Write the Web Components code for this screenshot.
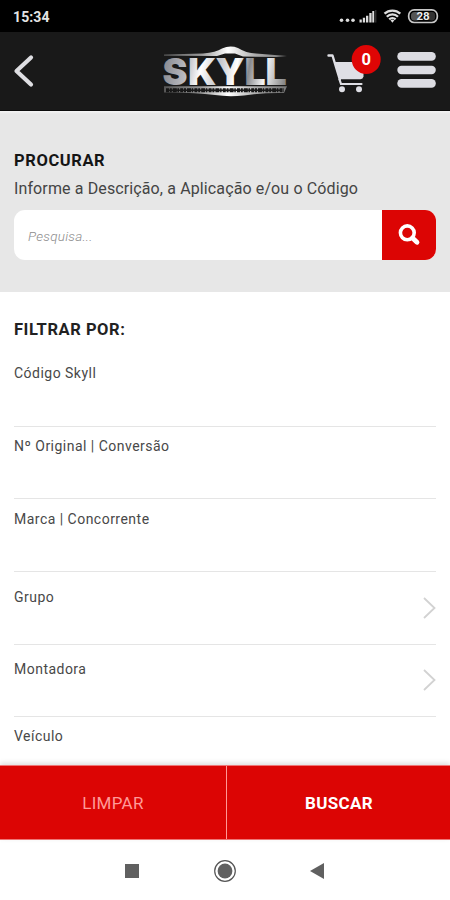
<!DOCTYPE html>
<html lang="pt-BR">
<head>
<meta charset="utf-8">
<title>Skyll</title>
<style>
html,body{margin:0;height:100%}
body{font-family:Roboto,"Liberation Sans",sans-serif;background:#fff;color:#333;overflow:hidden}
</style>
</head>
<body>
<skyll-app></skyll-app>
<script>
const define = (name, css, html) => customElements.define(name, class extends HTMLElement {
  connectedCallback() {
    if (this.shadowRoot) return;
    const root = this.attachShadow({mode: 'open'});
    const t = document.createElement('template');
    t.innerHTML = `<style>*{box-sizing:border-box}svg{display:block}${css}</style>${html}`;
    root.append(t.content.cloneNode(true));
  }
});

define('status-bar', `
:host{display:flex;height:32px;background:#000;color:#e4e4e4;justify-content:space-between;padding:0 11px 0 13px;align-items:center;box-sizing:border-box}
span{font-size:14px;font-weight:700;letter-spacing:.1px;line-height:32px;padding-top:1px}
`, `<span>15:34</span>
<svg width="100" height="24" viewBox="339 4 100 24">
  <g fill="#ddd"><circle cx="341.5" cy="20.2" r="1.8"/><circle cx="347.5" cy="20.2" r="1.8"/><circle cx="353" cy="20.2" r="1.8"/>
  <path d="M359.5 19.500h2.300v3h-2.300zM362.800 17.800h2.300v4.700h-2.300zM366 15.700h2.300v6.800h-2.300zM369.300 13h2.300v9.500h-2.300zM372.300 11h1.900v11.500h-1.900z"/><path d="M375.300 10h1v12.500h-1z" fill="#444"/></g>
  <g fill="none" stroke="#ddd" stroke-width="2.300"><path d="M384.500 13.700a11.500 11.500 0 0 1 15.800 0M386.800 16.700a8 8 0 0 1 11.200 0M389.200 19.300a4.700 4.700 0 0 1 6.400 0"/></g><path d="M390.500 20.300a3 3 0 0 1 3.800 0l-1.900 2.400z" fill="#ddd"/>
  <rect x="408.700" y="9.900" width="28.600" height="12.600" rx="5.500" fill="none" stroke="#c8c8c8" stroke-width="1.700"/>
  <rect x="411" y="12" width="9" height="8.400" rx="3.500" fill="#555"/><rect x="428" y="12" width="7" height="8.400" rx="3" fill="#333"/>
  <text x="423" y="20.300" font-size="11.500" font-weight="700" text-anchor="middle" fill="#eee">28</text>
</svg>`);

define('skyll-logo', `:host{display:block}`, `
<svg width="130" height="56" viewBox="159 44 130 56">
  <defs>
    <linearGradient id="m" gradientUnits="userSpaceOnUse" x1="163" y1="57" x2="285" y2="80"><stop offset="0" stop-color="#84868d"/><stop offset=".2" stop-color="#b9bac0"/><stop offset=".32" stop-color="#fff"/><stop offset=".46" stop-color="#c5c6ca"/><stop offset=".6" stop-color="#fff"/><stop offset=".7" stop-color="#888a8e"/><stop offset=".83" stop-color="#f4f4f4"/><stop offset="1" stop-color="#888"/></linearGradient>
    <linearGradient id="b"><stop offset="0" stop-color="#555"/><stop offset=".3" stop-color="#999"/><stop offset=".52" stop-color="#fff"/><stop offset=".75" stop-color="#aaa"/><stop offset="1" stop-color="#777"/></linearGradient>
  </defs>
  <path d="M164 55.500L203 54.500Q216 53.500 222 49.500Q230 46 238 49Q246 54 256 54.500L287 57L276 58L243 57.500L235 54.500H225L217 57L164 56.800z" fill="url(#b)"/>
  <text x="162.500 188 215.500 244.500 265.500" y="85.500" font-family="Inter" font-weight="900" font-size="37.500" fill="url(#m)">SKYLL</text>
  <path d="M164 87.300H287L284 94Q263 93.500 244 96.500Q228 98 215 96Q192 93 164 93.500z" fill="url(#b)"/>
  <path d="M166 91.300H284" stroke="#151515" stroke-width="4" stroke-dasharray="3 .8 2 1 4 .7 1.500 1.200"/>
  <path d="M168 91.300H282" stroke="#191919" stroke-width="1.500"/>
</svg>`);

define('app-header', `
:host{display:grid;grid-template-columns:1fr 130px 1fr;align-items:center;height:79px;background:#191919;border-bottom:1px solid #0b0b0b;padding:0 14px 0 12px;box-sizing:border-box}
.tools{display:flex;justify-content:flex-end;gap:15px;align-items:center}
`, `<svg width="22" height="34" viewBox="12 54 22 34"><path d="M31 57.500L16.500 71L31 84.500" fill="none" stroke="#dedee2" stroke-width="4.200" stroke-linecap="round" stroke-linejoin="round"/></svg>
<skyll-logo></skyll-logo>
<div class="tools">
<svg width="54" height="54" viewBox="327 44 54 54">
  <path d="M328.500 55.500H332.500L339.800 79.500" fill="none" stroke="#dfdfe5" stroke-width="2.400" stroke-linejoin="round" stroke-linecap="round"/>
  <path d="M339.500 79.500L341 84H361.500" fill="none" stroke="#dfdfe5" stroke-width="2.200" stroke-linecap="round"/>
  <path d="M334.500 62H363.500V76.500Q363 79 360.500 79.200H339.500z" fill="#dfdfe5"/><circle cx="342" cy="89.300" r="3" fill="#dfdfe5"/><circle cx="359" cy="89.300" r="3" fill="#dfdfe5"/>
  <circle cx="366.200" cy="59.500" r="14.500" fill="#df0505"/><text x="366.200" y="65" text-anchor="middle" font-size="16.500" font-weight="700" fill="#fff">0</text></svg>
<svg width="40" height="40" viewBox="396 50 40 40"><g fill="#dcdce2"><rect x="397.300" y="51" width="38.500" height="8.700" rx="4.300"/><rect x="397.300" y="64.800" width="38.500" height="8.500" rx="4.200"/><rect x="397.300" y="78" width="38.500" height="8.700" rx="4.300"/></g></svg>
</div>`);

define('search-panel', `
:host{display:block;height:181px;background:linear-gradient(#f4f4f4,#e7e7e7 3px);padding:40px 14px 0;box-sizing:border-box}
h2{margin:0;font-size:16.500px;line-height:20px;color:#151515;font-weight:700;letter-spacing:.600px}
p{margin:8px 0 0;font-size:16px;line-height:20px;letter-spacing:.12px;color:#444}
.box{margin-top:11px;display:flex;height:50px;border-radius:11px;overflow:hidden;background:#fff}
.in{flex:1;padding-left:14px;font-size:13.500px;line-height:53px;font-style:italic;color:#8c8c8c;font-weight:300;letter-spacing:.25px}
.go{width:54px;background:#dc0504;display:grid;place-items:center}
`, `<h2>PROCURAR</h2><p>Informe a Descrição, a Aplicação e/ou o Código</p>
<div class="box"><div class="in">Pesquisa...</div><div class="go"><svg width="24" height="24" viewBox="396 222 24 24"><circle cx="406.300" cy="231.800" r="6.900" fill="none" stroke="#fff" stroke-width="3.600"/><path d="M411.500 237L416 241.300" stroke="#fff" stroke-width="4.800" stroke-linecap="round"/></svg></div></div>`);

define('filter-row', `
:host{display:flex;justify-content:space-between;box-sizing:border-box;border-bottom:1px solid #e5e5e5;font-size:14px;line-height:18px;letter-spacing:.48px;color:#484848}
svg{display:none;margin-top:8px}:host([nav]) svg{display:block}
`, `<slot></slot><svg width="13" height="24" viewBox="0 0 13 24"><path d="M1 2L11.500 12L1 22" fill="none" stroke="#d2d2d2" stroke-width="1.800"/></svg>`);

define('filter-list', `
:host{display:block;height:473px;padding:28px 14px 0;box-sizing:border-box;overflow:hidden}
h2{margin:0 0 15px;font-size:16.500px;line-height:20px;font-weight:700;color:#222;letter-spacing:.550px}
filter-row{height:72px;padding-top:10px}
filter-row:first-of-type{padding-top:9px}
.b{height:73px;padding-top:11px}.g{height:73px;padding-top:16px}.m{padding-top:15px}
`, `<h2>FILTRAR POR:</h2><filter-row>Código Skyll</filter-row><filter-row>Nº Original | Conversão</filter-row><filter-row class="b">Marca | Concorrente</filter-row><filter-row class="g" nav>Grupo</filter-row><filter-row class="m" nav>Montadora</filter-row><filter-row>Veículo</filter-row>`);

define('action-bar', `
:host{display:flex;height:75px;background:#dc0504;box-sizing:border-box;border-top:1px solid #ee7777;border-bottom:1px solid #ee7777;position:relative;box-shadow:0 -2px 5px #0002}
div{flex:0 0 227px;display:grid;place-items:center;font-size:17px;letter-spacing:.3px;color:#ff9a98;border-right:1px solid #ff9896;padding-top:1px}
.y{flex:1;color:#fff;font-weight:700;border:0;padding-left:1px}
`, `<div>LIMPAR</div><div class="y">BUSCAR</div>`);

define('nav-bar', `
:host{display:flex;height:60px;background:#fff;justify-content:center;align-items:center;gap:73px;padding-top:1px;box-sizing:border-box}
`, `<svg width="16" height="16"><path d="M1 1H15V15H1z" fill="#606060"/></svg>
<svg width="24" height="24"><circle cx="12" cy="12" r="10.300" fill="none" stroke="#555" stroke-width="1.200"/><circle cx="12" cy="12" r="7.400" fill="#606060"/></svg>
<svg width="16" height="18"><path d="M0 9L14 1V17z" fill="#606060"/></svg>`);

define('skyll-app', `:host{display:flex;flex-direction:column;width:450px;height:900px;background:#fff}`,
`<status-bar></status-bar><app-header></app-header><search-panel></search-panel><filter-list></filter-list><action-bar></action-bar><nav-bar></nav-bar>`);
</script>
</body>
</html>
